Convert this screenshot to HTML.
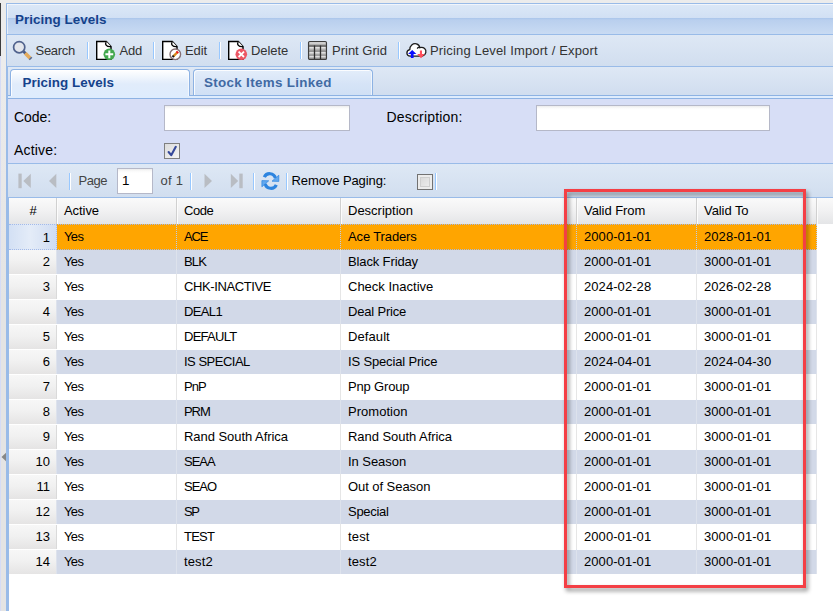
<!DOCTYPE html>
<html lang="en"><head><meta charset="utf-8"><title>Pricing Levels</title>
<style>
*{box-sizing:border-box;margin:0;padding:0}
html,body{width:833px;height:611px;overflow:hidden}
body{position:relative;background:linear-gradient(#ececec 0,#ececec 60px,#e4e4e4 300px);font-family:"Liberation Sans",sans-serif;font-size:13px;color:#000}
.abs{position:absolute}
.ldark{left:0;top:3px;width:1px;height:53px;background:#3c3c3c}
.llav{left:0;top:56px;width:1px;height:555px;background:#d5dcf5}
.ltri{left:1px;top:452px;width:5px;height:10px}
.pbl{left:6px;top:3px;width:2px;height:608px;background:#99bbe8}
.pbl3{left:8px;top:197px;width:1px;height:414px;background:#99bbe8}
.pbt{left:6px;top:3px;width:827px;height:1px;background:#99bbe8}
.hdr{left:7px;top:4px;width:826px;height:30px;background:linear-gradient(#dce8f7 0,#d1e0f4 14px,#a9c5eb 14px,#b9cfee 16px,#c9dbf3 30px);box-shadow:inset 1px 1px 0 rgba(255,255,255,.6)}
.hdr span{position:absolute;left:9px;top:0;line-height:31px;font-weight:bold;font-size:13.4px;color:#15428b;white-space:nowrap}
.hl{left:7px;width:826px;height:1px;background:#99bbe8}
.tb{left:7px;top:35px;width:826px;height:31px;background:linear-gradient(#dee8f5,#d1deef)}
.tb .t{position:absolute;top:0;line-height:31px;color:#333;font-size:13px;white-space:nowrap}
.sep{position:absolute;width:2px;border-left:1px solid #98c8ff;border-right:1px solid #fff}
.ic{position:absolute}
.ts{left:8px;top:67px;width:825px;height:28px;background:linear-gradient(#dee8f5,#d0ddef)}
.tab{position:absolute;box-shadow:inset 1px 1px 0 rgba(255,255,255,.85),inset -1px 0 0 rgba(255,255,255,.6);border:1px solid #8db2e3;border-bottom:none;border-radius:4px 4px 0 0;white-space:nowrap;font-weight:bold}
.tab span{position:absolute;top:0}
.tab.on{left:10px;top:69px;width:180px;height:27px;background:linear-gradient(#ffffff 0,#f2f7fd 6px,#e1ecfb 14px,#deecfd 100%);color:#15428b}
.tab.off{left:193px;top:69px;width:180px;height:26px;background:linear-gradient(#e3edfa 0,#d6e4f7 55%,#d0e0f5 100%);color:#416aa3}
.tsl{left:8px;top:95px;width:825px;height:1px;background:#8db2e3}
.tsp{left:8px;top:96px;width:825px;height:2px;background:#deecfd}
.form{left:8px;top:99px;width:825px;height:64px;background:#d7def6}
.form .l{position:absolute;font-size:14px;line-height:20px;white-space:nowrap}
.inp{position:absolute;height:26px;border:1px solid #b5b8c8;background:linear-gradient(#ececec 0,#fafafa 2px,#fff 4px)}
.cb{position:absolute;width:16px;height:16px;border:1px solid #7f7f7f;background:linear-gradient(135deg,#dcdcdc,#f4f4f4)}
.pg{left:8px;top:164px;width:825px;height:33px;background:linear-gradient(#dee8f5,#d1deef)}
.pg .t{position:absolute;top:0;line-height:33px;font-size:13px;white-space:nowrap}
.gh{left:9px;top:198px;width:824px;height:26px;background:linear-gradient(#fafafa 0,#f1f1f2 50%,#e4e5e7 100%)}
.gh .h{position:absolute;top:0;height:26px;line-height:26px;padding-left:7px;border-right:1px solid #d0d0d0;box-shadow:1px 0 0 #fcfcfc;white-space:nowrap}
.gbody{position:absolute;left:9px;top:224px;width:824px;height:387px;background:#fff}
.row{position:relative;width:808px;height:25px;border-top:1px solid #fff;background:#fff}
.row.alt{background:#d2d9e8;background-clip:padding-box}
.row.sel{height:26px;background:#ffa500;border-top:1px dotted #a3bae9;border-bottom:1px dotted #a3bae9}
.c{position:absolute;top:-1px;height:25px;line-height:25px;padding-left:7px;white-space:nowrap;overflow:hidden;border-right:1px solid #e6e6e6}
.alt .c{border-right-color:#dde2ec}
.sel .c{border-right:1px dotted #bccbe8;height:26px}
.sel + .row{height:24px;border-top:none}
.sel + .row .c{top:-1px}
.sel + .row .c0{top:0;height:24px;line-height:23px}
.c0{left:0;width:48px;text-align:right;padding:0 6px 0 0;background:linear-gradient(#f7f7f7 0,#f1f1f1 45%,#e5e4e4 100%);border-right:1px solid #dadada}
.row .c0{top:0;height:24px;line-height:23px}
.sel .c0{top:-1px;height:26px;line-height:25px;background:linear-gradient(90deg,#d3e0f4,#e4ecf8 45%,#cfdcf2);border:1px dotted #a3bae9;border-left:none}
.c1{left:48px;width:120px}
.c2{left:168px;width:164px}
.c3{left:332px;width:236px}
.c4{left:568px;width:120px}
.c5{left:688px;width:120px}
.red{left:564px;top:189px;width:242px;height:399px;border:3px solid #f43f45;filter:drop-shadow(2px 3px 2.2px rgba(0,0,0,.45))}

</style></head>
<body>
<div class="abs ldark"></div><div class="abs llav"></div>
<svg class="abs ltri" viewBox="0 0 5 10"><path d="M0.5 5 L5 0.8 L5 9.2 Z" fill="#878787"/></svg>
<div class="abs pbt"></div><div class="abs pbl"></div><div class="abs pbl3"></div>
<div class="abs hdr"><span style="left:8px;letter-spacing:0.05px">Pricing Levels</span></div>
<div class="abs hl" style="top:34px"></div>
<div class="abs tb">
  <svg class="ic" style="left:5px;top:5px" width="21" height="21" viewBox="0 0 21 21"><circle cx="7.2" cy="7.2" r="5.6" fill="#e3e6ec" stroke="#50628d" stroke-width="1.7"/><path d="M11.5 11.5 L13.6 13.6" stroke="#475a89" stroke-width="2.8"/><path d="M13.2 13.2 L18.2 18.2" stroke="#e3aa5c" stroke-width="3.6"/><path d="M18 18 L19.1 19.1" stroke="#596a90" stroke-width="3.6"/></svg>
  <span class="t" style="left:28.5px;letter-spacing:-0.29px">Search</span>
  <div class="sep" style="left:80px;top:7px;height:17px"></div>
  <svg class="ic" style="left:88px;top:5px" width="22" height="21" viewBox="0 0 22 21"><path d="M1.7 1.5 H11.3 L16 6.6 V19.4 H1.7 Z" fill="#fff" stroke="#000" stroke-width="1.4" stroke-linejoin="miter"/><path d="M11.3 1.5 C9.5 4.5 11.5 7 16 6.6" fill="#fff" stroke="#000" stroke-width="1.3"/><circle cx="14.3" cy="14.3" r="5.8" fill="#43a84f"/><path d="M14.3 10.4 V18.2 M10.4 14.3 H18.2" stroke="#fff" stroke-width="2"/></svg>
  <span class="t" style="left:112.5px;letter-spacing:-0.2px">Add</span>
  <div class="sep" style="left:146px;top:7px;height:17px"></div>
  <svg class="ic" style="left:154px;top:5px" width="22" height="21" viewBox="0 0 22 21"><path d="M1.7 1.5 H11.3 L16 6.6 V19.4 H1.7 Z" fill="#fff" stroke="#000" stroke-width="1.4"/><path d="M11.3 1.5 C9.5 4.5 11.5 7 16 6.6" fill="#fff" stroke="#000" stroke-width="1.3"/><circle cx="14.3" cy="14.3" r="5.3" fill="#fff" stroke="#857074" stroke-width="1.4"/><path d="M12.3 16.3 L16.6 12" stroke="#d98a1e" stroke-width="2.4"/><path d="M15.8 12.8 L17 11.6" stroke="#f0141e" stroke-width="2.6"/><path d="M11.6 17 L12.8 15.8" stroke="#111" stroke-width="2.2"/></svg>
  <span class="t" style="left:178px;letter-spacing:-0.07px">Edit</span>
  <div class="sep" style="left:212px;top:7px;height:17px"></div>
  <svg class="ic" style="left:220px;top:5px" width="22" height="21" viewBox="0 0 22 21"><path d="M1.7 1.5 H11.3 L16 6.6 V19.4 H1.7 Z" fill="#fff" stroke="#000" stroke-width="1.4"/><path d="M11.3 1.5 C9.5 4.5 11.5 7 16 6.6" fill="#fff" stroke="#000" stroke-width="1.3"/><circle cx="14.3" cy="14.3" r="5.8" fill="#ec5664"/><path d="M11.6 11.6 L17 17 M17 11.6 L11.6 17" stroke="#fff" stroke-width="1.8"/></svg>
  <span class="t" style="left:244px;letter-spacing:-0.06px">Delete</span>
  <div class="sep" style="left:293px;top:7px;height:17px"></div>
  <svg class="ic" style="left:300px;top:5px" width="21" height="21" viewBox="0 0 21 21"><defs><linearGradient id="gg" x1="0" y1="0" x2="0" y2="1"><stop offset="0" stop-color="#f4f4f4"/><stop offset="1" stop-color="#8a8a8a"/></linearGradient></defs><rect x="1.6" y="1.6" width="17.8" height="17.8" rx="1.2" fill="#9a9a9a" stroke="#3d3d3d" stroke-width="1.3"/><rect x="2.3" y="2.3" width="16.4" height="3.4" fill="url(#gg)"/><rect x="2.3" y="6.7" width="16.4" height="4.6" fill="url(#gg)"/><rect x="2.3" y="12.1" width="16.4" height="3.3" fill="url(#gg)"/><rect x="2.3" y="15.9" width="16.4" height="2.8" fill="url(#gg)"/><path d="M2 6.1 H19" stroke="#444" stroke-width=".9"/><path d="M7.5 5.6 V19 M13.5 5.6 V19" stroke="#2e2e2e" stroke-width="1.3"/></svg>
  <span class="t" style="left:325px;">Print Grid</span>
  <div class="sep" style="left:391px;top:7px;height:17px"></div>
  <svg class="ic" style="left:398px;top:7px" width="23" height="17" viewBox="0 0 23 17"><path d="M5.2 14.2 C1.2 14 0.6 8.6 4.8 7.6 C4.6 3.6 8 1 11.4 1.8 C13.6 2.4 14.6 4.2 14.8 5.6 C18.8 4.6 21.6 7.4 20.8 10.6 C20.4 12.4 19.2 13.6 17.4 14.2 Z" fill="#fff" stroke="#1a1a1a" stroke-width="1.3"/><path d="M12.2 6.6 C12.8 5.6 13.8 5.3 14.8 5.6" fill="none" stroke="#1a1a1a" stroke-width="1.2"/><path d="M7.2 8 L11.4 12 H8.6 V16 H5.8 V12 H3 Z" fill="#0a10ff"/><path d="M14.9 8.6 H17 V12 H19.8 L16 16.2 L12.2 12 H14.9 Z" fill="#ff4f5d"/></svg>
  <span class="t" style="left:423px;letter-spacing:0.15px">Pricing Level Import / Export</span>
</div>
<div class="abs hl" style="top:66px"></div>
<div class="abs ts"></div>
<div class="abs tsl"></div><div class="abs tsp"></div><div class="abs hl" style="top:98px;left:8px;background:#8db2e3"></div>
<div class="abs tab on"><span style="left:11.5px;line-height:25px;font-size:13.4px;letter-spacing:0.05px">Pricing Levels</span></div>
<div class="abs tab off"><span style="left:10px;line-height:25px;font-size:13.4px;letter-spacing:0.32px">Stock Items Linked</span></div>
<div class="abs form">
  <span class="l" style="left:6px;top:8px;letter-spacing:-0.05px">Code:</span>
  <div class="inp" style="left:156px;top:6px;width:186px"></div>
  <span class="l" style="left:378.5px;top:8px;letter-spacing:0.17px">Description:</span>
  <div class="inp" style="left:528px;top:6px;width:234px"></div>
  <span class="l" style="left:6px;top:41px;letter-spacing:0.17px">Active:</span>
  <div class="cb" style="left:156px;top:44px"><svg width="14" height="14" viewBox="0 0 14 14" style="position:absolute;left:0;top:0"><path d="M3.6 8 L6.2 11.2 L10.8 2.8" fill="none" stroke="#36499a" stroke-width="2.1" stroke-linecap="round" stroke-linejoin="round"/></svg></div>
</div>
<div class="abs hl" style="top:163px;left:8px"></div>
<div class="abs pg">
  <svg class="ic" style="left:10px;top:9px" width="14" height="16" viewBox="0 0 14 16"><rect x="0.4" y="0.6" width="3.3" height="14.6" fill="#b9bdc3"/><path d="M5.3 7.9 L12.8 0.8 V15 Z" fill="#b9bdc3"/></svg>
  <svg class="ic" style="left:40px;top:9px" width="10" height="16" viewBox="0 0 10 16"><path d="M1 7.9 L8.3 0.8 V15 Z" fill="#b9bdc3"/></svg>
  <div class="sep" style="left:61px;top:9px;height:17px"></div>
  <span class="t" style="left:70.5px;color:#444;letter-spacing:-0.48px">Page</span>
  <div class="inp" style="left:109px;top:4px;width:36px;height:26px"><span style="position:absolute;left:4px;top:0;line-height:24px;font-size:13.4px">1</span></div>
  <span class="t" style="left:152.5px;color:#444;letter-spacing:0.26px">of 1</span>
  <div class="sep" style="left:182px;top:9px;height:17px"></div>
  <svg class="ic" style="left:195px;top:9px" width="10" height="16" viewBox="0 0 10 16"><path d="M9 7.9 L1.5 0.8 V15 Z" fill="#b9bdc3"/></svg>
  <svg class="ic" style="left:222px;top:9px" width="14" height="16" viewBox="0 0 14 16"><rect x="9.3" y="0.6" width="3.4" height="14.6" fill="#b9bdc3"/><path d="M8.2 7.9 L0.8 0.8 V15 Z" fill="#b9bdc3"/></svg>
  <div class="sep" style="left:245px;top:9px;height:17px"></div>
  <svg class="ic" style="left:253px;top:7px" width="20" height="21" viewBox="0 0 20 21"><path d="M3.3 6.2 A5.9 5.9 0 0 1 14.4 7.2" fill="none" stroke="#2d84df" stroke-width="3.2"/><path d="M17.8 4.2 V10.4 L11 10.2 Z" fill="#62a8ef" stroke="#2d84df" stroke-width=".7" stroke-linejoin="round"/><path d="M15.3 13.8 A5.9 5.9 0 0 1 4.2 12.8" fill="none" stroke="#2d84df" stroke-width="3.2"/><path d="M0.9 15.8 V9.6 L7.7 9.8 Z" fill="#62a8ef" stroke="#2d84df" stroke-width=".7" stroke-linejoin="round"/></svg>
  <div class="sep" style="left:278px;top:9px;height:17px"></div>
  <span class="t" style="left:283.5px;letter-spacing:-0.09px">Remove Paging:</span>
  <div class="cb" style="left:409px;top:10px;background:linear-gradient(135deg,#d4d4d4,#f2f2f2);border-color:#727272;box-shadow:inset 0 0 0 2px #ececec,inset 0 0 0 3px #cfcfcf"></div>
  <div class="sep" style="left:427px;top:9px;height:17px"></div>
</div>
<div class="abs hl" style="top:197px;left:8px"></div>
<div class="abs gh">
  <div class="h" style="left:0;width:48px;padding:0 0 0 1px;text-align:center">#</div>
  <div class="h" style="left:48px;width:120px;letter-spacing:-0.07px">Active</div>
  <div class="h" style="left:168px;width:164px;letter-spacing:-0.43px">Code</div>
  <div class="h" style="left:332px;width:236px;">Description</div>
  <div class="h" style="left:568px;width:120px;letter-spacing:-0.07px">Valid From</div>
  <div class="h" style="left:688px;width:120px;letter-spacing:-0.07px">Valid To</div>
</div>
<div class="gbody">
<div class="row sel"><div class="c c0" style="letter-spacing:-0.02px">1</div><div class="c c1" style="letter-spacing:-0.66px">Yes</div><div class="c c2" style="letter-spacing:-1.16px">ACE</div><div class="c c3" style="letter-spacing:-0.13px">Ace Traders</div><div class="c c4" style="letter-spacing:0.07px">2000-01-01</div><div class="c c5" style="letter-spacing:0.07px">2028-01-01</div></div>
<div class="row alt"><div class="c c0" style="letter-spacing:-0.02px">2</div><div class="c c1" style="letter-spacing:-0.66px">Yes</div><div class="c c2" style="letter-spacing:-0.82px">BLK</div><div class="c c3" style="letter-spacing:-0.13px">Black Friday</div><div class="c c4" style="letter-spacing:0.07px">2000-01-01</div><div class="c c5" style="letter-spacing:0.07px">3000-01-01</div></div>
<div class="row"><div class="c c0" style="letter-spacing:-0.02px">3</div><div class="c c1" style="letter-spacing:-0.66px">Yes</div><div class="c c2" style="letter-spacing:-0.4px">CHK-INACTIVE</div><div class="c c3">Check Inactive</div><div class="c c4" style="letter-spacing:0.07px">2024-02-28</div><div class="c c5" style="letter-spacing:0.07px">2026-02-28</div></div>
<div class="row alt"><div class="c c0" style="letter-spacing:-0.02px">4</div><div class="c c1" style="letter-spacing:-0.66px">Yes</div><div class="c c2" style="letter-spacing:-0.63px">DEAL1</div><div class="c c3" style="letter-spacing:-0.19px">Deal Price</div><div class="c c4" style="letter-spacing:0.07px">2000-01-01</div><div class="c c5" style="letter-spacing:0.07px">3000-01-01</div></div>
<div class="row"><div class="c c0" style="letter-spacing:-0.02px">5</div><div class="c c1" style="letter-spacing:-0.66px">Yes</div><div class="c c2" style="letter-spacing:-0.73px">DEFAULT</div><div class="c c3" style="letter-spacing:0.09px">Default</div><div class="c c4" style="letter-spacing:0.07px">2000-01-01</div><div class="c c5" style="letter-spacing:0.07px">3000-01-01</div></div>
<div class="row alt"><div class="c c0" style="letter-spacing:-0.02px">6</div><div class="c c1" style="letter-spacing:-0.66px">Yes</div><div class="c c2" style="letter-spacing:-0.5px">IS SPECIAL</div><div class="c c3" style="letter-spacing:-0.16px">IS Special Price</div><div class="c c4" style="letter-spacing:0.07px">2024-04-01</div><div class="c c5" style="letter-spacing:0.07px">2024-04-30</div></div>
<div class="row"><div class="c c0" style="letter-spacing:-0.02px">7</div><div class="c c1" style="letter-spacing:-0.66px">Yes</div><div class="c c2" style="letter-spacing:-0.89px">PnP</div><div class="c c3" style="letter-spacing:-0.16px">Pnp Group</div><div class="c c4" style="letter-spacing:0.07px">2000-01-01</div><div class="c c5" style="letter-spacing:0.07px">3000-01-01</div></div>
<div class="row alt"><div class="c c0" style="letter-spacing:-0.02px">8</div><div class="c c1" style="letter-spacing:-0.66px">Yes</div><div class="c c2" style="letter-spacing:-1.08px">PRM</div><div class="c c3" style="letter-spacing:0.02px">Promotion</div><div class="c c4" style="letter-spacing:0.07px">2000-01-01</div><div class="c c5" style="letter-spacing:0.07px">3000-01-01</div></div>
<div class="row"><div class="c c0" style="letter-spacing:-0.02px">9</div><div class="c c1" style="letter-spacing:-0.66px">Yes</div><div class="c c2" style="letter-spacing:-0.05px">Rand South Africa</div><div class="c c3" style="letter-spacing:-0.05px">Rand South Africa</div><div class="c c4" style="letter-spacing:0.07px">2000-01-01</div><div class="c c5" style="letter-spacing:0.07px">3000-01-01</div></div>
<div class="row alt"><div class="c c0" style="letter-spacing:-0.02px">10</div><div class="c c1" style="letter-spacing:-0.66px">Yes</div><div class="c c2" style="letter-spacing:-1.02px">SEAA</div><div class="c c3" style="letter-spacing:-0.05px">In Season</div><div class="c c4" style="letter-spacing:0.07px">2000-01-01</div><div class="c c5" style="letter-spacing:0.07px">3000-01-01</div></div>
<div class="row"><div class="c c0" style="letter-spacing:-0.02px">11</div><div class="c c1" style="letter-spacing:-0.66px">Yes</div><div class="c c2" style="letter-spacing:-1.03px">SEAO</div><div class="c c3" style="letter-spacing:-0.06px">Out of Season</div><div class="c c4" style="letter-spacing:0.07px">2000-01-01</div><div class="c c5" style="letter-spacing:0.07px">3000-01-01</div></div>
<div class="row alt"><div class="c c0" style="letter-spacing:-0.02px">12</div><div class="c c1" style="letter-spacing:-0.66px">Yes</div><div class="c c2" style="letter-spacing:-1.36px">SP</div><div class="c c3" style="letter-spacing:-0.28px">Special</div><div class="c c4" style="letter-spacing:0.07px">2000-01-01</div><div class="c c5" style="letter-spacing:0.07px">3000-01-01</div></div>
<div class="row"><div class="c c0" style="letter-spacing:-0.02px">13</div><div class="c c1" style="letter-spacing:-0.66px">Yes</div><div class="c c2" style="letter-spacing:-0.76px">TEST</div><div class="c c3" style="letter-spacing:0.17px">test</div><div class="c c4" style="letter-spacing:0.07px">2000-01-01</div><div class="c c5" style="letter-spacing:0.07px">3000-01-01</div></div>
<div class="row alt"><div class="c c0" style="letter-spacing:-0.02px">14</div><div class="c c1" style="letter-spacing:-0.66px">Yes</div><div class="c c2" style="letter-spacing:0.13px">test2</div><div class="c c3" style="letter-spacing:0.13px">test2</div><div class="c c4" style="letter-spacing:0.07px">2000-01-01</div><div class="c c5" style="letter-spacing:0.07px">3000-01-01</div></div>
</div>
<div class="abs red"></div>
</body></html>
